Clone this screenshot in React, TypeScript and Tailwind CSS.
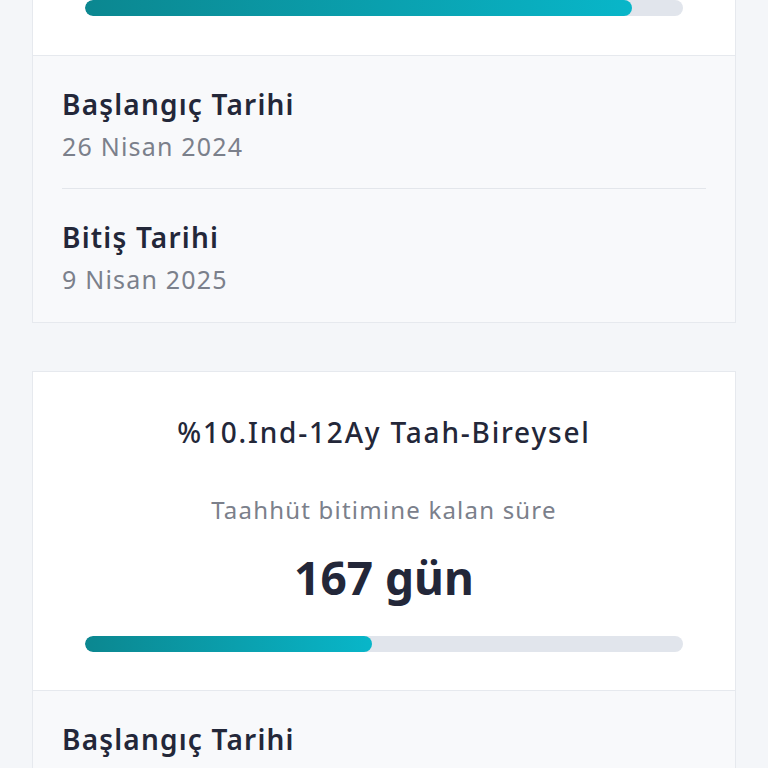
type Commitment = {
  title: string;
  remaining: string;
  progress: number;
  start: string;
  end: string;
  // scrolled past: only the progress bar of the header is still on screen
  scrolled?: boolean;
};

const ITEMS: Commitment[] = [
  {
    title: '',
    remaining: '',
    progress: 91.5,
    start: '26 Nisan 2024',
    end: '9 Nisan 2025',
    scrolled: true,
  },
  {
    title: '%10.Ind-12Ay Taah-Bireysel',
    remaining: '167 gün',
    progress: 48,
    start: '26 Nisan 2024',
    end: '9 Nisan 2025',
  },
];

function DateRow({ label, value, last }: { label: string; value: string; last?: boolean }) {
  return (
    <div className={`pt-[31px] ${last ? 'pb-[26px]' : 'pb-[25px] border-b border-[#e3e6eb]'}`}>
      <div className="text-[28px] leading-[34px] font-semibold tracking-[1.2px] text-[#232739]">{label}</div>
      <div className="mt-[8px] text-[25px] leading-[34px] tracking-[1.2px] text-[#7b808b]">{value}</div>
    </div>
  );
}

function ProgressBar({ value }: { value: number }) {
  return (
    <div className="h-[16px] w-full rounded-full bg-[#e1e5ec] overflow-hidden">
      <div
        className="h-full rounded-full bg-gradient-to-r from-[#0b8790] to-[#08b6c9]"
        style={{ width: `${value}%` }}
      />
    </div>
  );
}

function CommitmentCard({ item }: { item: Commitment }) {
  return (
    <div className={`border border-[#e6e9ee] bg-white ${item.scrolled ? 'border-t-0' : ''}`}>
      {item.scrolled ? (
        <div className="px-[52px] pb-[39px] border-b border-[#e6e9ee]">
          <ProgressBar value={item.progress} />
        </div>
      ) : (
        <div className="flex flex-col items-center px-[52px] pt-[40px] pb-[38px] border-b border-[#e6e9ee]">
          <div className="text-[28px] leading-[40px] font-medium tracking-[1.8px] text-[#232739]">{item.title}</div>
          <div className="mt-[42px] text-[24px] leading-[32px] tracking-[1.2px] text-[#7b808b]">
            Taahhüt bitimine kalan süre
          </div>
          <div className="mt-[23px] text-[46px] leading-[56px] font-bold text-[#232739]">{item.remaining}</div>
          <div className="mt-[31px] w-full">
            <ProgressBar value={item.progress} />
          </div>
        </div>
      )}
      <div className="bg-[#f8f9fb] px-[29px]">
        <DateRow label="Başlangıç Tarihi" value={item.start} />
        <DateRow label="Bitiş Tarihi" value={item.end} last />
      </div>
    </div>
  );
}

export default function App() {
  return (
    <div
      className="h-screen overflow-hidden bg-[#f4f6f9]"
      style={{ fontFamily: '"Noto Sans", Lato, sans-serif' }}
    >
      <div className="flex flex-col gap-[48px] px-[32px]">
        {ITEMS.map((item, i) => (
          <CommitmentCard key={i} item={item} />
        ))}
      </div>
    </div>
  );
}
